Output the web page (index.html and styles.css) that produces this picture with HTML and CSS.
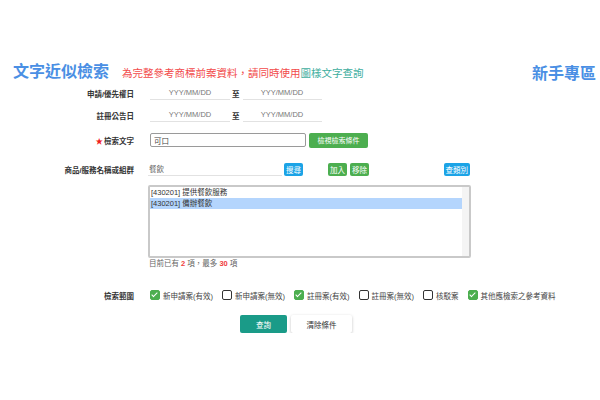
FILE: index.html
```html
<!DOCTYPE html>
<html lang="zh-Hant">
<head>
    <meta charset="UTF-8">
    <meta name="viewport" content="width=device-width, initial-scale=1.0">
    <title>文字近似檢索</title>
    <link rel="stylesheet" href="styles.css">
</head>
<body>
    <div class="page">
        <div class="header">
            <h1 class="title">文字近似檢索</h1>
            <span class="note">為完整參考商標前案資料，請同時使用<a href="#" class="note-link">圖樣文字查詢</a></span>
            <a href="#" class="guide">新手專區</a>
        </div>

        <div class="form">
            <div class="row row-date">
                <label class="label">申請/優先權日</label>
                <div class="field">
                    <input type="text" class="date" placeholder="YYY/MM/DD">
                    <span class="to">至</span>
                    <input type="text" class="date" placeholder="YYY/MM/DD">
                </div>
            </div>
            <div class="row row-date">
                <label class="label">註冊公告日</label>
                <div class="field">
                    <input type="text" class="date" placeholder="YYY/MM/DD">
                    <span class="to">至</span>
                    <input type="text" class="date" placeholder="YYY/MM/DD">
                </div>
            </div>
            <div class="row row-text">
                <label class="label"><span class="star">★</span>檢索文字</label>
                <div class="field">
                    <input type="text" class="text-input" value="可口">
                    <button class="btn btn-green btn-view">檢視檢索條件</button>
                </div>
            </div>
            <div class="row row-goods">
                <label class="label">商品/服務名稱或組群</label>
                <div class="field field-wide">
                    <input type="text" class="goods-input" value="餐飲">
                    <button class="btn btn-blue">搜尋</button>
                    <button class="btn btn-green btn-add">加入</button>
                    <button class="btn btn-green">移除</button>
                    <button class="btn btn-blue btn-class">查類別</button>
                </div>
            </div>
            <div class="row">
                <div class="label"></div>
                <div class="list-wrap">
                    <div class="list">
                        <div class="list-items">
                            <div class="item">[430201] 提供餐飲服務</div>
                            <div class="item selected">[430201] 備辦餐飲</div>
                        </div>
                        <div class="scroll-track"></div>
                    </div>
                    <div class="count">目前已有 <b>2</b> 項，最多 <b>30</b> 項</div>
                </div>
            </div>
            <div class="row row-scope">
                <label class="label">檢索範圍</label>
                <div class="field checks">
                    <span class="check on">新申請案(有效)</span>
                    <span class="check">新申請案(無效)</span>
                    <span class="check on">註冊案(有效)</span>
                    <span class="check">註冊案(無效)</span>
                    <span class="check">核駁案</span>
                    <span class="check on">其他應檢索之參考資料</span>
                </div>
            </div>
            <div class="actions">
                <button class="btn btn-query">查詢</button>
                <button class="btn btn-clear">清除條件</button>
            </div>
        </div>
    </div>
</body>
</html>
```

FILE: styles.css
```css
body {
    margin: 0;
    font-family: "Liberation Sans", "Noto Sans CJK TC", sans-serif;
    color: #333;
    background-color: #fff;
}
.page {
    padding-top: 62px;
}
.header {
    display: flex;
    align-items: center;
    height: 20px;
    padding: 0 4px 0 13px;
}
.title {
    margin: 0;
    font-size: 16px;
    line-height: 20px;
    font-weight: bold;
    color: #4a8fe4;
}
.note {
    margin-left: 13px;
    font-size: 10.5px;
    color: #f24b4b;
}
.note-link {
    color: #3eae9e;
    text-decoration: none;
}
.guide {
    margin-left: auto;
    font-size: 16px;
    font-weight: bold;
    color: #4a8fe4;
    text-decoration: none;
}

.form {
    font-size: 7.5px;
}
.row {
    display: flex;
    align-items: center;
}
.label {
    width: 134px;
    margin-right: 14px;
    text-align: right;
    font-weight: bold;
    color: #333;
    flex-shrink: 0;
}
.star {
    color: #f02020;
    margin-right: 1px;
}
.field {
    display: flex;
    align-items: center;
}
.row-date {
    height: 22px;
}
.row-text {
    height: 28px;
}
.row-goods {
    height: 30px;
}
input {
    font-family: inherit;
    font-size: 7.5px;
    outline: none;
    box-sizing: border-box;
}
.date {
    width: 80px;
    height: 13px;
    margin-left: 2px;
    padding: 0;
    border: none;
    border-bottom: 1px solid #e2e2e2;
    text-align: center;
    color: #555;
}
.date + .to + .date {
    margin-left: 3px;
    width: 79px;
}
.date::placeholder {
    color: #777;
}
.to {
    margin-left: 2px;
    font-weight: bold;
}
.text-input {
    width: 156px;
    height: 14px;
    margin-left: 2px;
    padding: 0 3px;
    border: 1px solid #9a9a9a;
    border-radius: 2px;
    color: #444;
}

.btn {
    border: none;
    border-radius: 2px;
    padding: 0 2px;
    height: 13px;
    font-family: inherit;
    font-size: 7.5px;
    color: #fff;
    cursor: pointer;
}
.btn-green {
    background-color: #4cae4f;
}
.btn-blue {
    background-color: #1ba3e6;
}
.btn-view {
    margin-left: 3px;
    width: 59px;
    height: 15px;
    font-size: 7px;
}
.field-wide {
    width: 322px;
}
.goods-input {
    width: 134px;
    height: 13px;
    padding: 0 1px;
    border: none;
    border-bottom: 1px solid #e2e2e2;
    color: #666;
}
.goods-input + .btn {
    margin-left: 2px;
}
.btn-add {
    margin-left: 25px;
    margin-right: 3px;
}
.btn-class {
    margin-left: auto;
    padding: 0 2px;
}

.list-wrap {
    width: 323px;
}
.list {
    display: flex;
    margin-top: 1px;
    height: 73px;
    border: 2px solid #c9c9c9;
    border-radius: 2px;
    box-sizing: border-box;
}
.list-items {
    flex: 1;
}
.item {
    height: 11px;
    line-height: 11px;
    padding-left: 1px;
    color: #333;
}
.item.selected {
    background-color: #b4d5fd;
}
.scroll-track {
    width: 7px;
    background-color: #f4f4f4;
}
.count {
    line-height: 12px;
    height: 12px;
    padding-left: 1px;
    color: #666;
}
.count b {
    color: #f03c3c;
}

.row-scope {
    margin-top: 17px;
    height: 16px;
}
.checks {
    margin-left: 2px;
}
.check {
    position: relative;
    display: flex;
    align-items: center;
    margin-right: 9px;
    color: #444;
}
.check::before {
    content: "";
    width: 8px;
    height: 8px;
    margin-right: 3px;
    border: 1px solid #333;
    border-radius: 2px;
}
.check.on::before {
    border-color: #4cae4f;
    background-color: #4cae4f;
}
.check.on::after {
    content: "";
    position: absolute;
    left: 3px;
    top: 50%;
    width: 2px;
    height: 5px;
    margin-top: -4px;
    border-right: 1.2px solid #fff;
    border-bottom: 1.2px solid #fff;
    transform: rotate(45deg);
}

.actions {
    display: flex;
    margin-top: 12px;
    padding-left: 240px;
}
.btn-query {
    width: 47px;
    height: 18px;
    background-color: #1a9b88;
}
.btn-clear {
    width: 61px;
    height: 18px;
    margin-left: 4px;
    color: #333;
    background-color: #fff;
    box-shadow: 0 1px 3px rgba(0, 0, 0, 0.25);
}
```
